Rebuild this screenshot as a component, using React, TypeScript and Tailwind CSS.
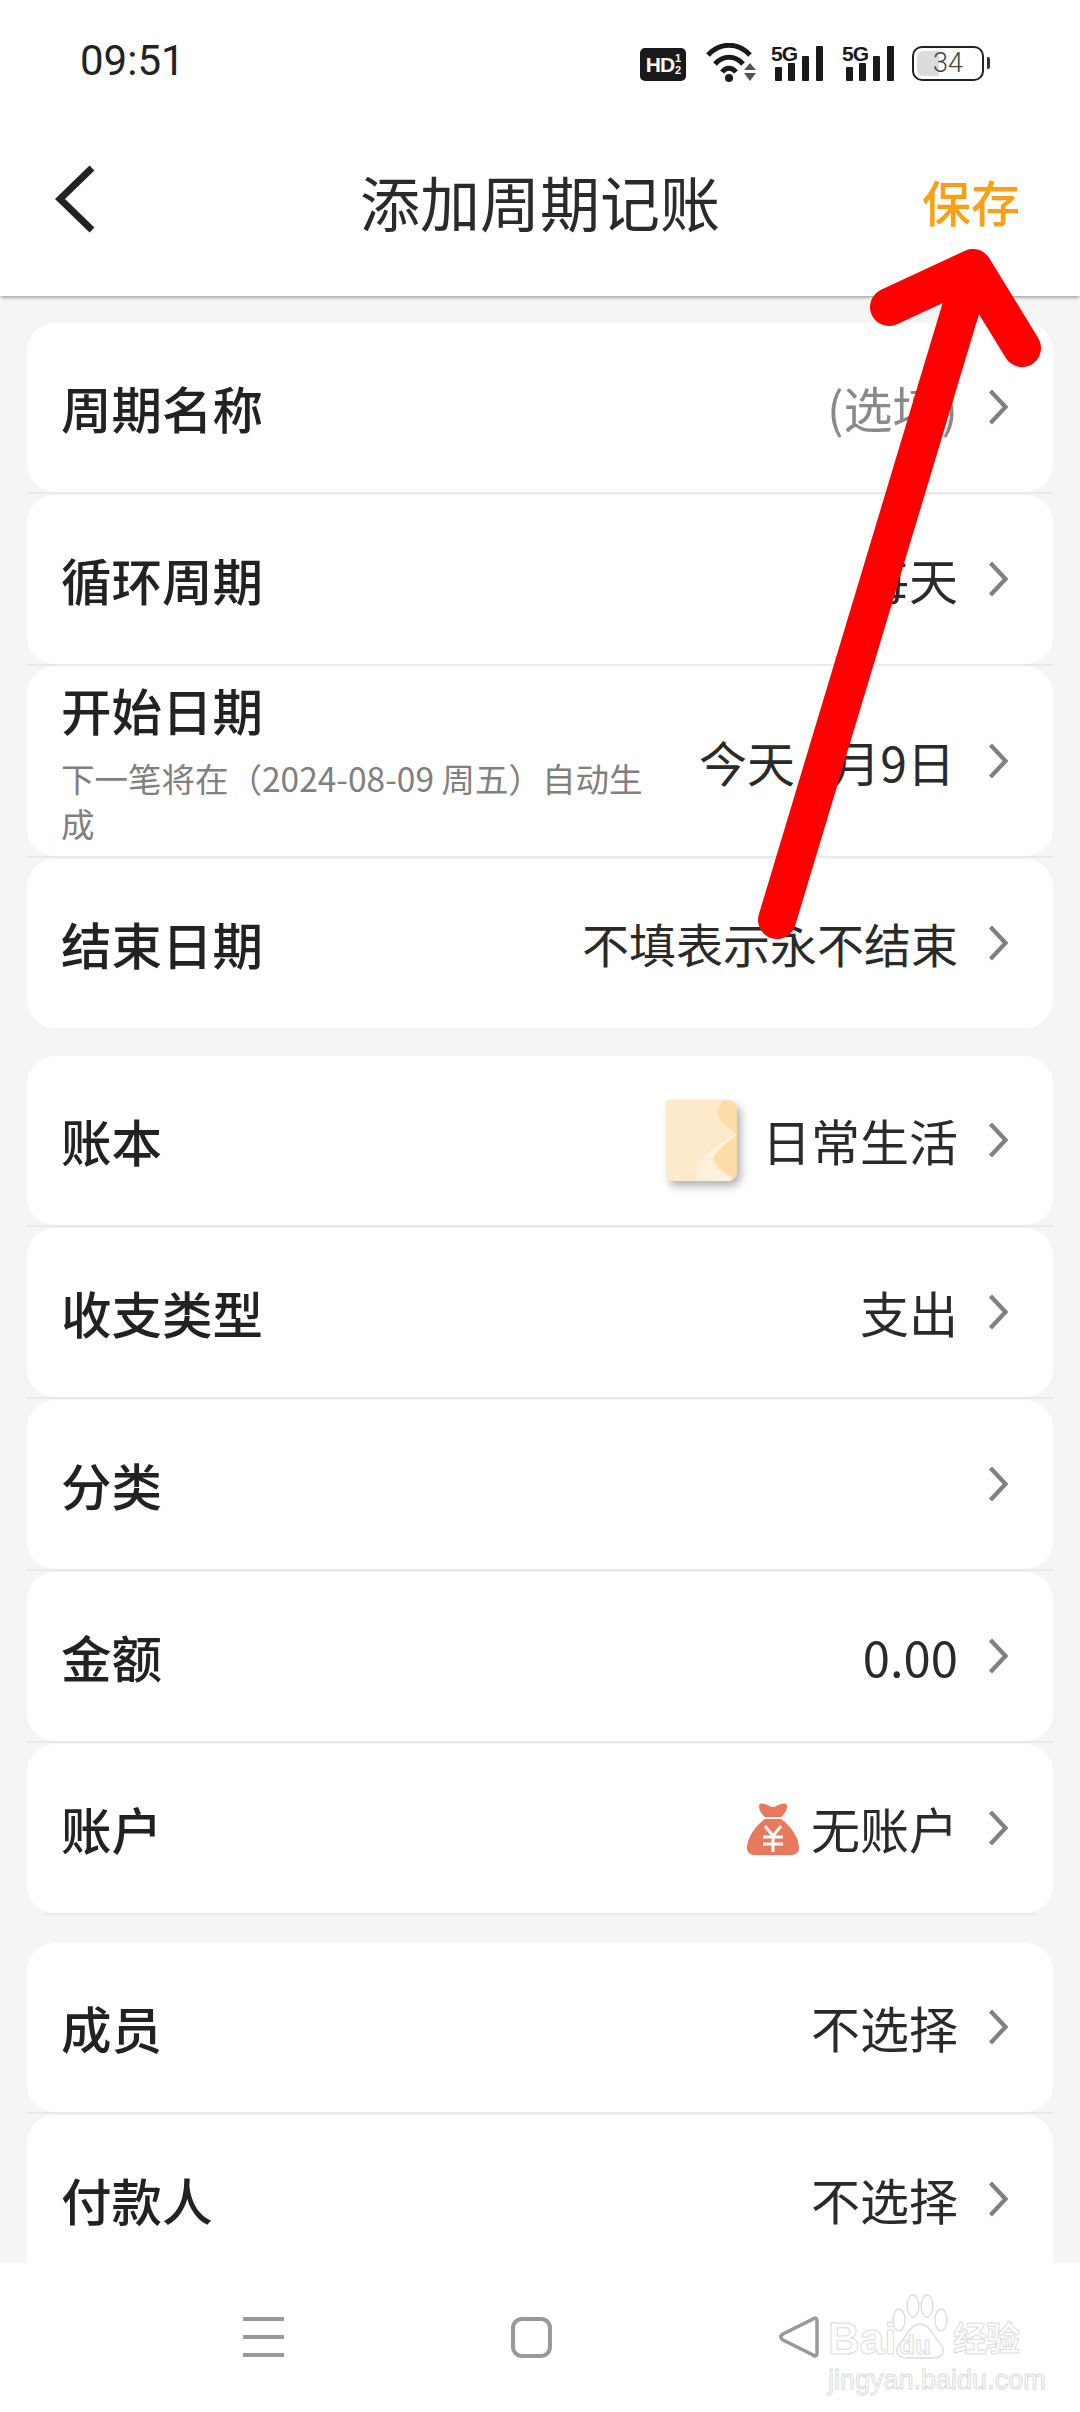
import React from "react";

const cjk = "[font-family:'Noto_Sans_CJK_SC','Noto_Sans',sans-serif]";

function Chevron() {
  return (
    <svg width="20" height="36" viewBox="0 0 20 36" className="shrink-0">
      <path d="M2.5 2 L17.5 18 L2.5 34" fill="none" stroke="#808080" strokeWidth="4.2" />
    </svg>
  );
}

function Book() {
  return (
    <div className="relative w-[71px] h-[81px] rounded-r-[9px] overflow-hidden shadow-[4px_5px_8px_rgba(0,0,0,0.3)] bg-[#fdeacb]">
      <svg width="71" height="81" viewBox="0 0 71 81" className="block">
        <path d="M71 0 L58 0 C52 6 50 14 54 20 L71 35 Z" fill="#fedca8" />
        <path d="M71 35 L50 52 C46 58 48 64 56 70 L71 81 Z" fill="#fedca8" />
        <defs>
          <linearGradient id="pg" x1="0" x2="1" y1="0" y2="0">
            <stop offset="0" stopColor="#fdeed6" />
            <stop offset="1" stopColor="#fff6e8" />
          </linearGradient>
        </defs>
        <path d="M30 81 L30 70 C30 66 34 60 40 54 L66 36 L46 58 C44 64 50 70 68 81 Z" fill="url(#pg)" />
      </svg>
    </div>
  );
}

function Bag() {
  return (
    <svg width="52" height="54" viewBox="0 0 52 54" className="shrink-0">
      <path d="M13 2 C18 0 22 5 26 5 C30 5 34 0 39 2 C42 4 38 12 34 15 L18 15 C14 12 10 4 13 2 Z" fill="#e9785c" />
      <path d="M18 17 L34 17 C44 24 52 36 52 46 C52 51 48 53 44 53 L8 53 C4 53 0 51 0 46 C0 36 8 24 18 17 Z" fill="#e9785c" />
      <path d="M18 24 L26 34 L34 24 M16 35 H36 M16 42 H36 M26 34 V50" stroke="#fff" strokeWidth="3" fill="none" />
    </svg>
  );
}

function Row({ label, value, gray, small, pre }: { label: string; value?: string; gray?: boolean; small?: boolean; pre?: React.ReactNode }) {
  return (
    <div className="h-[169px] shrink-0 rounded-[28px] bg-white flex items-center pl-[34px] pr-[45px]">
      <span className="text-[50.5px] leading-[60px] font-medium text-[#222] flex-1 mt-[-2px]">{label}</span>
      {pre}
      {value && (
        <span className={`leading-[60px] mt-[-2px] ${small ? "text-[47px]" : "text-[49px]"} ${gray ? "text-[#8a8a8a]" : "text-[#2a2a2a]"}`}>{value}</span>
      )}
      <span className="ml-[30px] flex mt-[-2px]"><Chevron /></span>
    </div>
  );
}

function Divider({ tight }: { tight?: boolean }) {
  return <div className={`h-[2px] shrink-0 bg-[#e9e9e9] ${tight ? "" : "mb-[1px]"}`} />;
}

function Signal() {
  return (
    <div className="relative w-[53px] h-[36px]">
      <span className="absolute left-0 top-[-3px] text-[21px] leading-[24px] font-bold text-[#1a1a1a] tracking-[-1px] [font-family:'Liberation_Sans',sans-serif]">5G</span>
      <div className="absolute left-[4px] bottom-0 w-[7px] h-[14px] rounded-[1px] bg-[#1a1a1a]" />
      <div className="absolute left-[17px] bottom-0 w-[7px] h-[18px] rounded-[1px] bg-[#1a1a1a]" />
      <div className="absolute left-[31px] bottom-0 w-[7px] h-[25px] rounded-[1px] bg-[#1a1a1a]" />
      <div className="absolute left-[45px] bottom-0 w-[7px] h-[35px] rounded-[1px] bg-[#1a1a1a]" />
    </div>
  );
}

export default function App() {
  return (
    <div className={`relative w-[1080px] h-[2412px] overflow-hidden flex flex-col bg-[#f5f5f5] ${cjk}`}>
      {/* status bar */}
      <div className="h-[100px] shrink-0 bg-white relative flex items-start pl-[80px] pr-[90px] pt-[37px]">
        <span className="text-[42px] leading-[48px] text-[#222] [font-family:Roboto,sans-serif]">09:51</span>
        <div className="ml-auto flex items-center h-[40px] mt-[6px]">
          <div className="w-[46px] h-[33px] rounded-[5px] bg-[#1a1a1a] flex items-center justify-center text-white font-bold text-[21px] leading-none tracking-[-1px] [font-family:'Liberation_Sans',sans-serif] mt-[2px]">
            HD<span className="flex flex-col text-[11px] leading-[12px] ml-[1px]"><span>1</span><span>2</span></span>
          </div>
          <svg width="50" height="40" viewBox="0 0 50 40" className="ml-[20px]">
            <path d="M2 12 C14 -1 32 -1 44 12" fill="none" stroke="#1a1a1a" strokeWidth="5" />
            <path d="M9 21 C17 12 29 12 37 21" fill="none" stroke="#1a1a1a" strokeWidth="5" />
            <path d="M16 29 C20 24 26 24 30 29" fill="none" stroke="#1a1a1a" strokeWidth="5" />
            <circle cx="23" cy="35" r="4" fill="#1a1a1a" />
            <path d="M38 27 L50 27 L44 20 Z M38 30 L50 30 L44 38 Z" fill="#555" />
          </svg>
          <div className="ml-[15px]"><Signal /></div>
          <div className="ml-[18px]"><Signal /></div>
          <div className="ml-[17px] relative w-[72px] h-[35px] rounded-[10px] border-[2.5px] border-[#222] overflow-hidden">
            <div className="absolute left-[3px] top-[3px] bottom-[3px] w-[22px] bg-[#dcdcdc] rounded-l-[6px]" />
            <span className="absolute inset-0 flex items-center justify-center text-[27px] leading-none text-[#444] [font-family:Roboto,sans-serif] font-light">34</span>
          </div>
          <div className="w-[3px] h-[12px] ml-[3px] bg-[#333] rounded-r-[2px]" />
        </div>
      </div>

      {/* header */}
      <div className="h-[196px] shrink-0 bg-white relative z-10 flex items-center justify-between pl-[54px] pr-[60px] pt-[8px] shadow-[0_3px_3px_-1px_rgba(0,0,0,0.3)]">
        <svg width="42" height="68" viewBox="0 0 42 68" className="shrink-0 mt-[-6px]">
          <path d="M38 3 L6 34 L38 65" fill="none" stroke="#222" strokeWidth="7" />
        </svg>
        <span className="text-[60px] leading-[80px] text-[#2a2a2a] absolute left-0 right-0 text-center mt-[-2px]">添加周期记账</span>
        <span className="text-[49px] leading-[60px] text-[#f8a118] font-medium mt-[-2px]">保存</span>
      </div>

      {/* content */}
      <div className="flex-1 min-h-0 overflow-hidden px-[27px] pt-[27px] flex flex-col gap-[28px]">
        <div className="flex flex-col shrink-0">
          <Row label="周期名称" value="(选填)" gray />
          <Divider />
          <Row label="循环周期" value="每天" />
          <Divider tight />
          <div className="h-[190px] shrink-0 rounded-[28px] bg-white flex items-center pl-[34px] pr-[45px]">
            <div className="w-[590px] self-start pt-[13px]">
              <div className="text-[50.5px] leading-[60px] font-medium text-[#222]">开始日期</div>
              <div className="mt-[16px] text-[33.5px] leading-[45px] text-[#808080]">下一笔将在（2024-08-09 周五）自动生成</div>
            </div>
            <span className="ml-auto text-[48px] leading-[60px] text-[#2a2a2a]">今天 8月9日</span>
            <span className="ml-[33px] flex"><Chevron /></span>
          </div>
          <Divider />
          <Row label="结束日期" value="不填表示永不结束" small />
        </div>

        <div className="flex flex-col shrink-0">
          <Row label="账本" value="日常生活" pre={<div className="mr-[25px]"><Book /></div>} />
          <Divider />
          <Row label="收支类型" value="支出" />
          <Divider />
          <Row label="分类" />
          <Divider />
          <Row label="金额" value="0.00" />
          <Divider />
          <Row label="账户" value="无账户" pre={<div className="mr-[12px] flex"><Bag /></div>} />
          <div className="h-[2px] mx-[18px] bg-[#e9e9e9]" />
        </div>

        <div className="flex flex-col shrink-0">
          <Row label="成员" value="不选择" />
          <Divider />
          <Row label="付款人" value="不选择" />
        </div>
      </div>

      {/* nav bar */}
      <div className="h-[149px] shrink-0 bg-white flex items-start pt-[54px] pl-[243px] gap-[227px] relative z-10">
        <div className="w-[41px] h-[40px] flex flex-col justify-between">
          <div className="h-[4px] bg-[#999]" />
          <div className="h-[4px] bg-[#999]" />
          <div className="h-[4px] bg-[#999]" />
        </div>
        <div className="w-[41px] h-[41px] rounded-[11px] border-[4px] border-[#999]" />
        <svg width="40" height="42" viewBox="0 0 40 42" className="mt-[-1px]">
          <path d="M34 3 C36 1 38 2 38 5 L38 37 C38 40 36 41 34 39 L4 24 C1 22 1 20 4 18 Z" fill="none" stroke="#999" strokeWidth="3.5" />
        </svg>
      </div>

      {/* watermark over the nav bar */}
      <div className="absolute left-[828px] top-[2294px] w-[194px] h-[100px] z-20">
        <span className="absolute left-[0px] top-[27px] text-[44px] leading-[36px] font-bold text-white [-webkit-text-stroke:1px_#dcdcdc] [font-family:'Liberation_Sans',sans-serif]">Bai</span>
        <svg width="62" height="66" viewBox="0 0 62 66" className="absolute left-[64px] top-[0px]">
          <g fill="#fff" stroke="#dcdcdc" strokeWidth="1.3">
            <ellipse cx="7" cy="26" rx="6" ry="11" />
            <ellipse cx="21" cy="12" rx="6" ry="11" />
            <ellipse cx="35" cy="12" rx="6" ry="11" />
            <ellipse cx="49" cy="26" rx="6" ry="11" />
            <path d="M28 30 C38 30 42 44 50 52 C54 60 48 64 40 64 L16 64 C8 64 2 60 6 52 C14 44 18 30 28 30 Z" />
          </g>
        </svg>
        <span className="absolute left-[71px] top-[38px] text-[26px] leading-[26px] font-bold text-white [-webkit-text-stroke:1px_#dcdcdc] [font-family:'Liberation_Sans',sans-serif]">du</span>
        <span className="absolute left-[125px] top-[24px] text-[34px] leading-[38px] font-bold tracking-[-1px] text-white [-webkit-text-stroke:1px_#dcdcdc]">经验</span>
        <span className="absolute left-[0px] top-[73px] text-[27px] leading-[26px] text-white [-webkit-text-stroke:1px_#dcdcdc] whitespace-nowrap [font-family:'Liberation_Sans',sans-serif]">jingyan.baidu.com</span>
      </div>

      {/* annotation arrow */}
      <svg width="1080" height="2412" viewBox="0 0 1080 2412" className="absolute left-0 top-0 z-30 pointer-events-none">
        <path d="M777 920 L973 268 M889 307 L973 268 L1022 348" fill="none" stroke="#ff0000" strokeWidth="38" strokeLinecap="round" strokeLinejoin="round" />
      </svg>
    </div>
  );
}
